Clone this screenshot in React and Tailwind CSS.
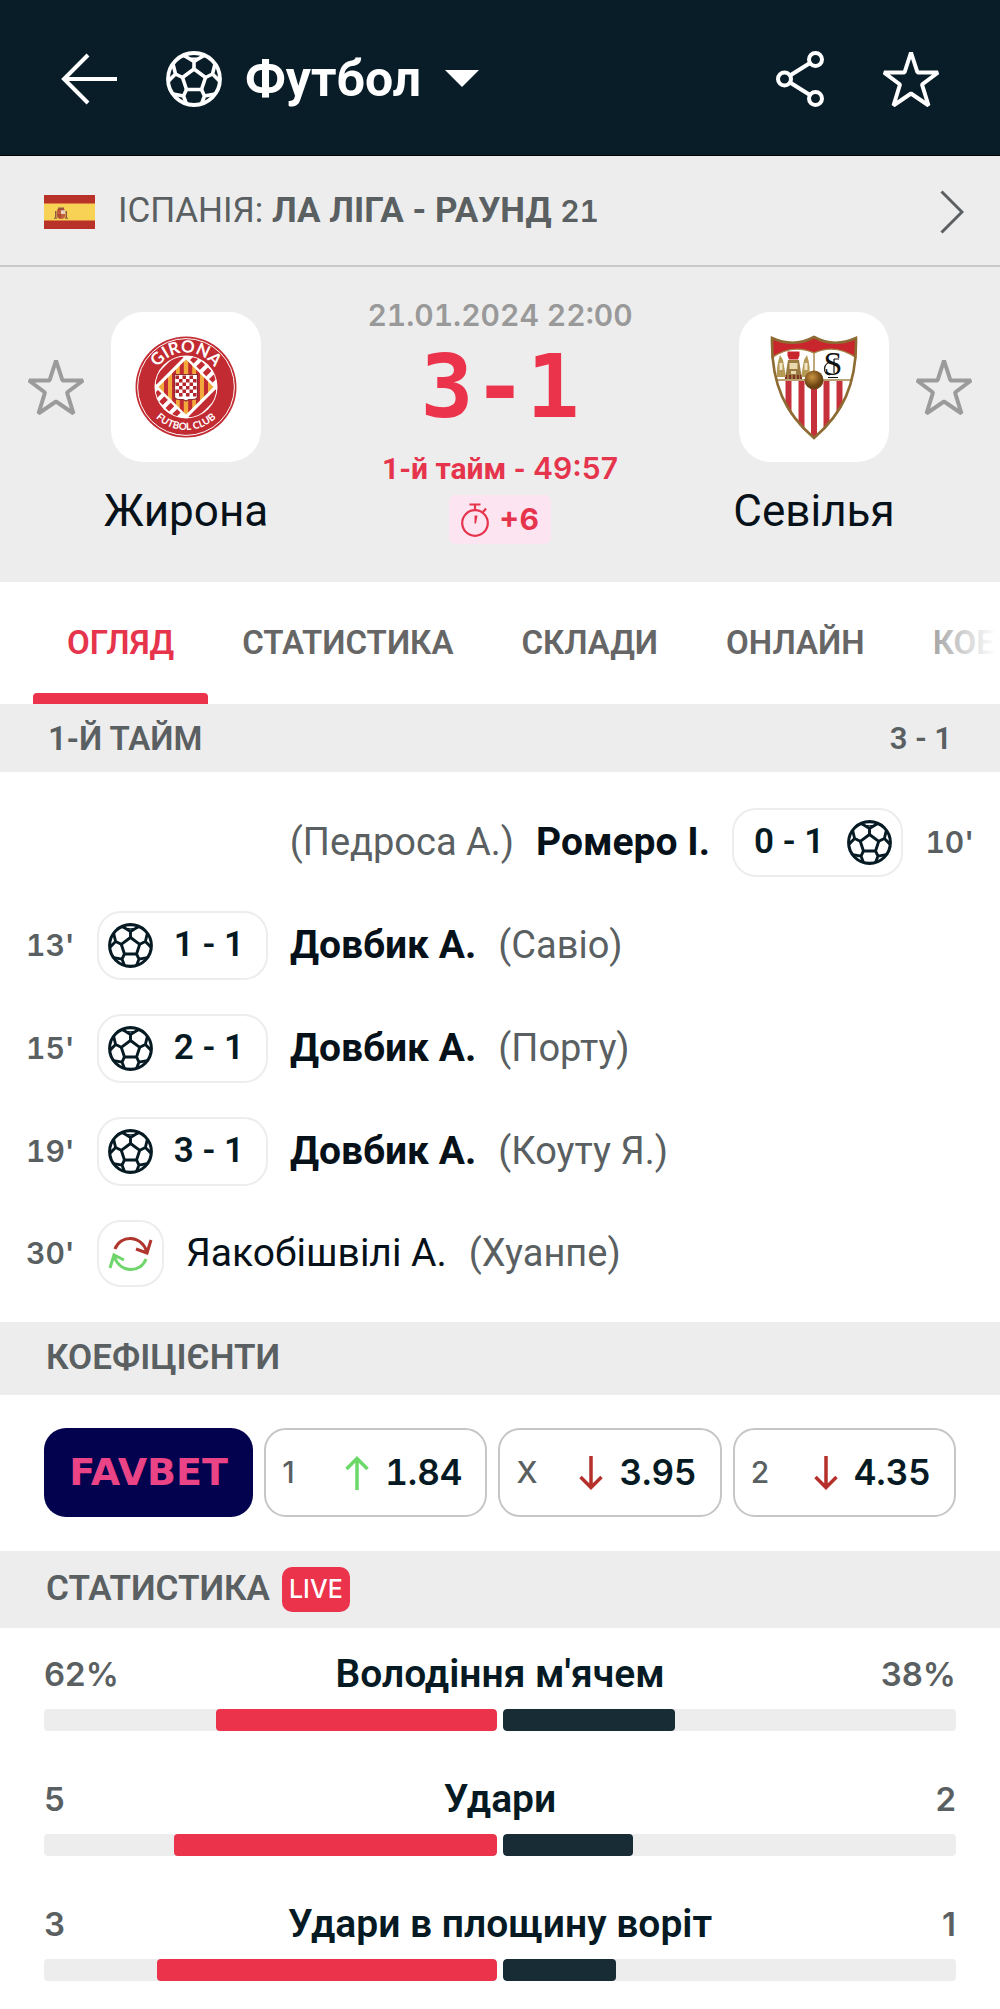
import React from "react";

const NUM = "font-['Inter',sans-serif] font-semibold tabular-nums";

function BallIcon({ className }) {
  return (
    <svg viewBox="0 0 56 56" className={className} fill="none" stroke="currentColor" strokeWidth="3.600" strokeLinejoin="round" aria-hidden="true">
      <circle cx="28" cy="28" r="26" strokeWidth="3.800" />
      <path d="M28 18 39.5 26.5 35.5 38.5H20.5L16.5 26.5Z" />
      <path d="M28 18V10.5L18 4.500M28 10.500L38 4.500" />
      <path d="M18 5.500C22 8 34 8 38 5.500" strokeWidth="1.600" />
      <path d="M16.500 26.500 9.500 23 2.500 30M9.500 23 7 13M39.500 26.500 46.500 23 53.500 30M46.500 23 49 13" />
      <path d="M20.500 38.500 17.500 45 20.500 53M17.500 45 7 43M35.500 38.500 38.500 45 35.500 53M38.500 45 49 43" />
    </svg>
  );
}

function StarIcon({ className }) {
  return (
    <svg viewBox="0 0 56 56" className={className} fill="none" stroke="currentColor" strokeWidth="4" strokeLinejoin="bevel" aria-hidden="true">
      <path d="M28 1.500 34.500 21.500H55L39 33.500 45.500 54.500 28 42.500 10.500 54.500 17 33.500 1 21.500H21.500Z" />
    </svg>
  );
}

function SpainFlag() {
  return (
    <svg viewBox="0 0 51 34" className="h-[34px] w-[51px] shrink-0" role="img" aria-label="Іспанія">
      <path fill="#b8322a" d="M0 0h51v34H0z" />
      <path fill="#f8d254" d="M0 8.500h51v17H0z" />
      <path fill="#c0603a" d="M13 15h8v6q0 3-4 3t-4-3z" />
      <path fill="#e9d2c0" d="M17 15h4v4h-4z" />
      <path fill="#8f5a44" d="M14 12.500h6v1.500h-6zM11 16h1.500v7H11zM21.500 16H23v7h-1.500z" />
      <path fill="#b04a34" d="M13.500 14h7v1.200h-7zM13 19h4v4h-2z" />
      <path fill="#a8793f" d="M10 22.500h3V24h-3zM21 22.500h3V24h-3z" />
    </svg>
  );
}

function GironaCrest() {
  const cells = [];
  for (let r = 0; r < 6; r += 1) {
    for (let c = 0; c < 6; c += 1) {
      if ((r + c) % 2 === 0) cells.push(<rect key={`${r}-${c}`} x={40.5 + c * 3.5} y={39.5 + r * 3.5} width="3.5" height="3.5" fill="#b3252c" />);
    }
  }
  return (
    <svg viewBox="0 0 102 102" className="size-[102px]" role="img" aria-label="Girona Futbol Club">
      <defs>
        <path id="crest-top" d="M16.500 51a34.500 34.500 0 0 1 69 0" />
        <path id="crest-bottom" d="M8 51a43 43 0 0 0 86 0" />
        <clipPath id="crest-inner"><circle cx="51" cy="51" r="30.500" /></clipPath>
        <clipPath id="crest-diamond"><path d="M51 23.500 78.500 51 51 78.500 23.500 51Z" /></clipPath>
      </defs>
      <circle cx="51" cy="51" r="50.500" fill="#c22b31" />
      <circle cx="51" cy="51" r="48.400" fill="none" stroke="#fff" strokeWidth="1" />
      <circle cx="51" cy="51" r="31.500" fill="#fff" />
      <g clipPath="url(#crest-inner)">
        <path fill="none" stroke="#c22b31" strokeWidth="7" d="M19 46 46 19M56 83 83 56" />
        <path fill="none" stroke="#c22b31" strokeWidth="9" strokeDasharray="5 4" d="M57 22 81 46M21 56 45 80" />
        <path fill="#fff" d="M51 20 82 51 51 82 20 51Z" />
      </g>
      <g clipPath="url(#crest-diamond)">
        <path fill="#f3a83b" d="M23 23h56v56H23z" />
        <path stroke="#c22b31" strokeWidth="4" d="M31 23v56M39 23v56M46.800 23v56M55.200 23v56M63 23v56M71 23v56" />
      </g>
      <path fill="#fff" stroke="#8e2a30" strokeWidth="1.200" d="M39.500 38.500h23v22q0 3-5 3h-3.500l-3 1.500-3-1.500h-3.500q-5 0-5-3z" />
      <g>{cells}</g>
      <text fill="#fff" fontFamily="Lato, sans-serif" fontWeight="700" fontSize="17" textAnchor="middle">
        <textPath href="#crest-top" startOffset="50%">GIRONA</textPath>
      </text>
      <text fill="#fff" fontFamily="Lato, sans-serif" fontWeight="700" fontSize="10" textAnchor="middle">
        <textPath href="#crest-bottom" startOffset="50%">FUTBOL CLUB</textPath>
      </text>
    </svg>
  );
}

function SevillaCrest() {
  return (
    <svg viewBox="0 0 88 105" className="h-[105px] w-[88px]" role="img" aria-label="Sevilla FC">
      <defs>
        <clipPath id="shield"><path d="M1 2Q24 13 44 1 64 13 87 2C88 50 73 80 44 104 15 80 0 50 1 2Z" /></clipPath>
        <radialGradient id="gold-ball" cx="40%" cy="35%"><stop offset="0" stopColor="#c99440" /><stop offset="1" stopColor="#6b4212" /></radialGradient>
      </defs>
      <g clipPath="url(#shield)">
        <path fill="#fff" d="M0 0h88v105H0z" />
        <path fill="#c9252c" d="M0 0h88v24Q66 8 44 18 22 8 0 24z" />
        <path fill="none" stroke="#a58448" strokeWidth="1.400" d="M0 24Q22 8 44 18 66 8 88 24M44 17v28M3 45h82" />
        <path stroke="#c5303a" strokeWidth="6" d="M18.500 46v60M31.500 46v60M44 46v60M56.500 46v60M69.500 46v60" />
        <path fill="#c9252c" d="M17.500 16.500h12v4l-1.500 4h-9l-1.500-4z" />
        <path fill="#9b7a41" d="M18 25h11l3 19H15z" />
        <path fill="#e8d9b0" d="M19.500 28h8v6h-8zM21 36h5v3h-5z" />
        <path stroke="#7d2721" strokeWidth="1.800" d="M16 40v4M20 40v4M24 40v4M28 40v4M31 40v4" />
        <path fill="#b59a57" d="M10 20l3 5 3 17H7q-1-10 3-22zM37 20l-3 5-3 17h8q2-10-2-22z" />
        <path fill="#f0e6c6" d="M9.500 28h3v7h-3zM34.500 28h3v7h-3z" />
        <text x="63" y="40" fill="#111" fontFamily="Liberation Serif, serif" fontSize="34" textAnchor="middle">S</text>
        <path fill="none" stroke="#111" strokeWidth="1.200" d="M64 24v14M64 24h5M64 30h4M62 27c-9 0-10 12-2 13M58 42.500h10" />
      </g>
      <path fill="none" stroke="#8d6b33" strokeWidth="2.600" d="M2 3Q24 13 44 2 64 13 86 3C87 50 72 79 44 103 16 79 1 50 2 3Z" />
      <circle cx="44" cy="45" r="9.500" fill="url(#gold-ball)" />
    </svg>
  );
}

function Team({ name, crest }) {
  return (
    <div className="flex w-[164px] shrink-0 flex-col items-center pt-[45px]">
      <div className="flex size-[150px] items-center justify-center rounded-[32px] bg-white">{crest}</div>
      <h2 className="mt-[21px] text-[44px] leading-[56px] whitespace-nowrap text-[#061119]">{name}</h2>
    </div>
  );
}

function FavouriteTeam({ name }) {
  return (
    <button type="button" aria-label={`Додати ${name} до обраних`} className="mt-[92px] shrink-0 text-[#9b9b9b]">
      <StarIcon className="size-14" />
    </button>
  );
}

const tabs = ["ОГЛЯД", "СТАТИСТИКА", "СКЛАДИ", "ОНЛАЙН", "КОЕФІЦІЄНТИ"];

const events = [
  { time: "10'", score: "0 - 1", player: "Ромеро І.", extra: "(Педроса А.)", away: true },
  { time: "13'", score: "1 - 1", player: "Довбик А.", extra: "(Савіо)" },
  { time: "15'", score: "2 - 1", player: "Довбик А.", extra: "(Порту)" },
  { time: "19'", score: "3 - 1", player: "Довбик А.", extra: "(Коуту Я.)" },
  { time: "30'", player: "Яакобішвілі А.", extra: "(Хуанпе)" },
];

function SwapIcon() {
  return (
    <svg viewBox="0 0 45 40" className="h-10 w-[45px]" fill="none" strokeWidth="3" aria-hidden="true">
      <path stroke="#b0352c" d="M7 15C12 1 33 0 39 18M28 15l11 4 4-13" />
      <path stroke="#6fd66b" d="M38 25C33 39 12 40 6 22M2 34 6 21l10 5" />
    </svg>
  );
}

function EventRow({ event }) {
  return (
    <li className={event.away ? "flex flex-row-reverse items-center" : "flex items-center"}>
      <span className={`${NUM} w-[71px] shrink-0 text-[30px] text-[#5a5f62] ${event.away ? "text-right" : ""}`}>{event.time}</span>
      {event.score ? (
        <span className={`flex h-[69px] w-[171px] shrink-0 items-center justify-between rounded-3xl border-2 border-[#ededed] text-[#061a24] ${event.away ? "flex-row-reverse pr-[9px] pl-[20px]" : "pr-[22px] pl-[9px]"}`}>
          <BallIcon className="size-[45px]" />
          <span className="text-[35px] font-semibold whitespace-nowrap">{event.score}</span>
        </span>
      ) : (
        <span className="flex size-[67px] shrink-0 items-center justify-center rounded-3xl border-2 border-[#ededed]">
          <SwapIcon />
        </span>
      )}
      <span className={`mx-[22px] text-[39px] whitespace-nowrap text-[#061119] ${event.score ? "font-bold" : ""}`}>{event.player}</span>
      <span className="text-[38px] whitespace-nowrap text-[#5a5f62]">{event.extra}</span>
    </li>
  );
}

const odds = [
  { label: "1", value: "1.84", up: true },
  { label: "X", value: "3.95" },
  { label: "2", value: "4.35" },
];

function OddArrow({ up }) {
  return (
    <svg viewBox="0 0 24 34" className={up ? "h-[34px] w-6 text-[#6bd968]" : "h-[34px] w-6 rotate-180 text-[#b5302a]"} fill="none" stroke="currentColor" strokeWidth="3.500" aria-hidden="true">
      <path d="M12 34V3M1.500 13 12 2.500 22.500 13" />
    </svg>
  );
}

const stats = [
  { name: "Володіння м'ячем", home: "62%", away: "38%", share: 62 },
  { name: "Удари", home: "5", away: "2", share: 71.4 },
  { name: "Удари в площину воріт", home: "3", away: "1", share: 75 },
];

function StatRow({ stat }) {
  return (
    <li className="pb-[45px]">
      <div className="mb-3 grid grid-cols-[1fr_auto_1fr] items-center leading-[46px] text-[#5a5f62]">
        <span className="font-['Inter',sans-serif] text-[33px] font-semibold">{stat.home}</span>
        <span className="text-[39px] font-semibold text-[#061a24]">{stat.name}</span>
        <span className="text-right font-['Inter',sans-serif] text-[33px] font-semibold">{stat.away}</span>
      </div>
      <div className="grid grid-cols-2 gap-1.5">
        <div className="flex h-[22px] justify-end overflow-hidden rounded bg-[#ededed]">
          <div className="rounded bg-[#eb334c]" style={{ width: `${stat.share}%` }} />
        </div>
        <div className="flex h-[22px] overflow-hidden rounded bg-[#ededed]">
          <div className="rounded bg-[#182c36]" style={{ width: `${100 - stat.share}%` }} />
        </div>
      </div>
    </li>
  );
}

export default function App() {
  return (
    <main className="w-full overflow-hidden bg-white font-['Roboto',sans-serif]">
      <header className="flex h-[156px] items-center border-b border-black bg-[#081d28] px-[61px] pt-0.5 text-white">
        <button type="button" aria-label="Назад">
          <svg viewBox="0 0 56 52" className="h-[52px] w-14" fill="none" stroke="currentColor" strokeWidth="4" aria-hidden="true">
            <path d="M56 26H3M27 2 3 26 27 50" />
          </svg>
        </button>
        <button type="button" className="ml-[49px] flex items-center">
          <BallIcon className="size-14" />
          <span className="ml-[23px] text-[50px] leading-[60px] font-bold">Футбол</span>
          <svg viewBox="0 0 34 18" className="ml-6 h-[18px] w-[34px]" fill="currentColor" aria-hidden="true"><path d="M0 0h34L17 17z" /></svg>
        </button>
        <button type="button" aria-label="Поділитися" className="ml-auto">
          <svg viewBox="0 0 48 56" className="h-14 w-12" fill="none" stroke="currentColor" strokeWidth="4" aria-hidden="true">
            <circle cx="39.500" cy="8.500" r="6.500" /><circle cx="8.500" cy="28" r="6.500" /><circle cx="39.500" cy="47.500" r="6.500" />
            <path d="M14 24.500 34 12M14 31.500 34 44" />
          </svg>
        </button>
        <button type="button" aria-label="Додати до обраних" className="ml-[59px]"><StarIcon className="size-14" /></button>
      </header>

      <a href="#league" className="flex h-[111px] items-center border-b-2 border-[#c9c9c9] bg-[#ededed] pt-0.5 pr-9 pl-11 text-[35px] whitespace-nowrap text-[#5a5f62]">
        <SpainFlag />
        <span className="ml-[23px]">ІСПАНІЯ: <b className="font-bold">ЛА ЛІГА - РАУНД <span className={`${NUM} text-[30px]`}>21</span></b></span>
        <svg viewBox="0 0 24 44" className="ml-auto h-11 w-6" fill="none" stroke="currentColor" strokeWidth="3" aria-hidden="true"><path d="M1.500 1.500 22 22 1.500 42.500" /></svg>
      </a>

      <section className="flex h-[315px] items-start bg-[#ededed] px-7">
        <FavouriteTeam name="Жирона" />
        <div className="ml-5"><Team name="Жирона" crest={<GironaCrest />} /></div>
        <div className="flex flex-1 flex-col items-center pt-[30px] text-[#e5344c]">
          <time className={`${NUM} text-[30px] leading-9 whitespace-nowrap text-[#999]`}>21.01.2024 22:00</time>
          <strong className="mt-[22px] font-['DejaVu_Sans_Mono',monospace] text-[88px] leading-[64px] font-bold text-[#eb334c]">3-1</strong>
          <span className="mt-[29px] text-[30px] leading-10 font-bold whitespace-nowrap">1-й тайм - <span className="font-['Inter',sans-serif] text-[30px] font-semibold">49:57</span></span>
          <span className="mt-1.5 flex h-[49px] items-center gap-2.5 rounded-md bg-[#fce4f0] px-3">
            <svg viewBox="0 0 28 34" className="h-[34px] w-7" fill="none" stroke="currentColor" strokeWidth="2.200" aria-hidden="true">
              <circle cx="14" cy="20" r="12.800" /><path d="M14 7V1.500M8.500 1.500h11M22 9l3-3.500" /><path fill="currentColor" stroke="none" d="M13.500 12.500h3L15 20.500h-1.500z" />
            </svg>
            <span className="font-['Inter',sans-serif] text-[30px] font-bold">+6</span>
          </span>
        </div>
        <div className="mr-5"><Team name="Севілья" crest={<SevillaCrest />} /></div>
        <FavouriteTeam name="Севілья" />
      </section>

      <nav className="relative flex h-[122px] overflow-hidden pl-[33px]">
        {tabs.map((t, i) => (
          <button key={t} type="button" className={`flex h-full shrink-0 flex-col items-center justify-between pt-[38px] text-[33px] leading-[46px] font-semibold ${i === 0 ? "text-[#e5344c]" : "text-[#666]"}`}>
            <span className="px-[34px]">{t}</span>
            {i === 0 && <span className="h-[11px] w-full rounded-t bg-[#eb334c]" />}
          </button>
        ))}
        <span className="pointer-events-none absolute top-0 right-0 h-full w-[90px] bg-linear-to-r from-white/20 to-white to-95%" />
      </nav>

      <div className="flex h-[68px] items-center justify-between bg-[#ededed] px-12 pt-0.5 text-[33px] font-semibold text-[#5a5f62]">
        <h3>1-Й ТАЙМ</h3>
        <span className="text-[31px]">3 - 1</span>
      </div>
      <ul className="flex flex-col gap-[34px] px-[26px] pt-9 pb-[35px]">
        {events.map((e) => <EventRow key={e.time} event={e} />)}
      </ul>

      <h3 className="flex h-[73px] items-center bg-[#ededed] px-[46px] text-[35px] font-semibold text-[#5a5f62]">КОЕФІЦІЄНТИ</h3>
      <div className="grid grid-cols-[209fr_223fr_223fr_223fr] gap-[11px] px-11 pt-[33px] pb-[34px]">
        <a href="#favbet" className="flex h-[89px] items-center justify-center rounded-[22px] bg-[#02024f] font-['DejaVu_Sans',sans-serif] text-[38px] font-bold text-[#ea4386]">FAVBET</a>
        {odds.map((o) => (
          <button key={o.label} type="button" className="flex h-[89px] items-center rounded-[22px] border-2 border-[#c5c7c7] pr-[23px] pl-4">
            <span className="mr-auto font-['Inter',sans-serif] text-[30px] font-medium text-[#5a5f62]">{o.label}</span>
            <OddArrow up={o.up} />
            <span className={`${NUM} ml-4 text-[35px] text-[#061a24]`}>{o.value}</span>
          </button>
        ))}
      </div>

      <div className="flex h-[77px] items-center gap-3 bg-[#ededed] px-[46px]">
        <h3 className="text-[35px] font-semibold text-[#5a5f62]">СТАТИСТИКА</h3>
        <span className="flex h-[45px] items-center rounded-[10px] bg-[#eb334c] px-[7px] font-['Inter',sans-serif] text-[25px] font-medium text-white">LIVE</span>
      </div>
      <ul className="px-11 pt-[23px]">
        {stats.map((s) => <StatRow key={s.name} stat={s} />)}
      </ul>
    </main>
  );
}
